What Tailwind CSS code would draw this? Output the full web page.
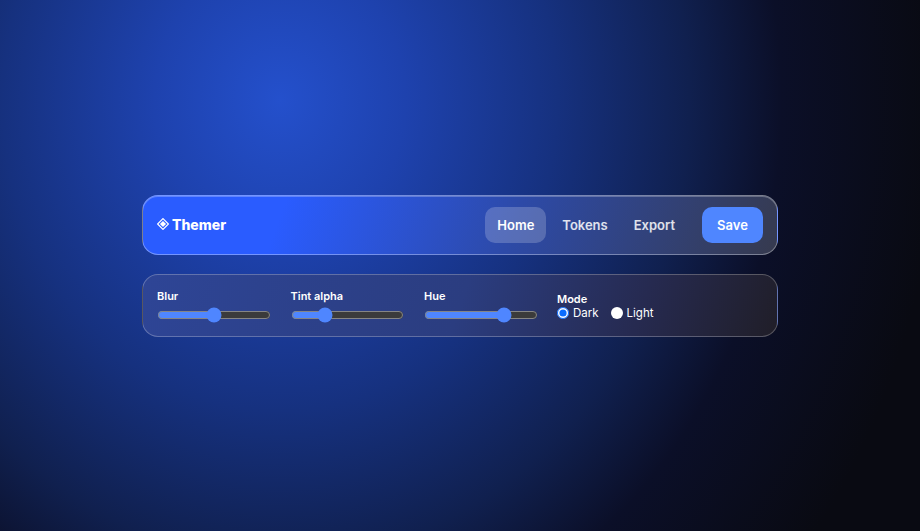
<!DOCTYPE html>
<html lang="en">

<head>
    <meta charset="UTF-8">
    <meta name="viewport" content="width=device-width, initial-scale=1.0">
    <title>Themer</title>
    <script src="https://cdn.jsdelivr.net/npm/@tailwindcss/browser@4"></script>
</head>

<body class="h-[531px] overflow-hidden bg-[#090a12] bg-[radial-gradient(660px_740px_at_280px_100px,#2450cc_0%,#1e42ae_19%,#16317f_42%,#10204f_62%,#0b0f28_76%,#090a12_100%)] font-['Inter',sans-serif] text-white">
    <div class="flex h-full flex-col justify-center gap-[19px] px-[142px] pt-[1px]">
        <nav class="flex h-[60px] items-center justify-between rounded-2xl border border-white/35 bg-[linear-gradient(110deg,#2a5cff_0%,#2a5cff_22%,#2d4aa8_58%,#363a4e_100%)] px-[14px] shadow-[inset_0_1px_0_rgba(255,255,255,0.25)]">
            <div class="flex items-center gap-[3px] pb-[2px] text-[14px] font-extrabold">
                <svg class="size-3" viewBox="0 0 12 12" fill="none" stroke="white" stroke-width="1.2">
                    <path d="M6 .6 11.4 6 6 11.4 .6 6Z" />
                    <path d="M6 2.9 9.1 6 6 9.1 2.9 6Z" fill="white" stroke="none" />
                </svg>
                Themer
            </div>
            <div class="flex items-center">
                <div class="flex items-center text-[13px] font-semibold">
                    <a class="flex h-9 w-[61px] items-center justify-center rounded-[10px] bg-white/20 pt-[1px]">Home</a>
                    <a class="flex h-9 items-center rounded-[10px] pt-[1px] pr-[14px] pl-4 text-white/85">Tokens</a>
                    <a class="flex h-9 items-center rounded-[10px] px-3 pt-[1px] text-white/85">Export</a>
                </div>
                <button class="ml-[15px] h-9 w-[61px] rounded-[10px] bg-[#4f86ff] pt-[1px] text-[13px] font-semibold">Save</button>
            </div>
        </nav>
        <section class="flex h-[63px] items-center gap-5 rounded-2xl border border-white/25 bg-[linear-gradient(110deg,#2e4596_0%,#2b3d80_50%,#262a50_78%,#201e28_100%)] px-[14px] text-[11px] font-semibold">
            <label class="flex w-[113.5px] flex-col gap-[3px]">Blur
                <input type="range" value="50" class="m-0 w-full accent-[#4f86ff] [color-scheme:dark]">
            </label>
            <label class="flex w-[113.5px] flex-col gap-[3px]">Tint alpha
                <input type="range" value="27" class="m-0 w-full accent-[#4f86ff] [color-scheme:dark]">
            </label>
            <label class="flex w-[113.5px] flex-col gap-[3px]">Hue
                <input type="range" value="74" class="m-0 w-full accent-[#4f86ff] [color-scheme:dark]">
            </label>
            <div class="-ml-[0.5px] flex flex-col pt-[1px]">
                <span class="leading-[13px]">Mode</span>
                <div class="flex items-center gap-3 text-[11.5px] leading-[14px] font-normal">
                    <label class="flex items-center gap-1"><input type="radio" name="mode" checked class="m-0 size-3 accent-[#0a6cff]"> Dark</label>
                    <label class="flex items-center gap-1"><input type="radio" name="mode" class="m-0 size-3 appearance-none rounded-full bg-white"> Light</label>
                </div>
            </div>
        </section>
    </div>
</body>

</html>
